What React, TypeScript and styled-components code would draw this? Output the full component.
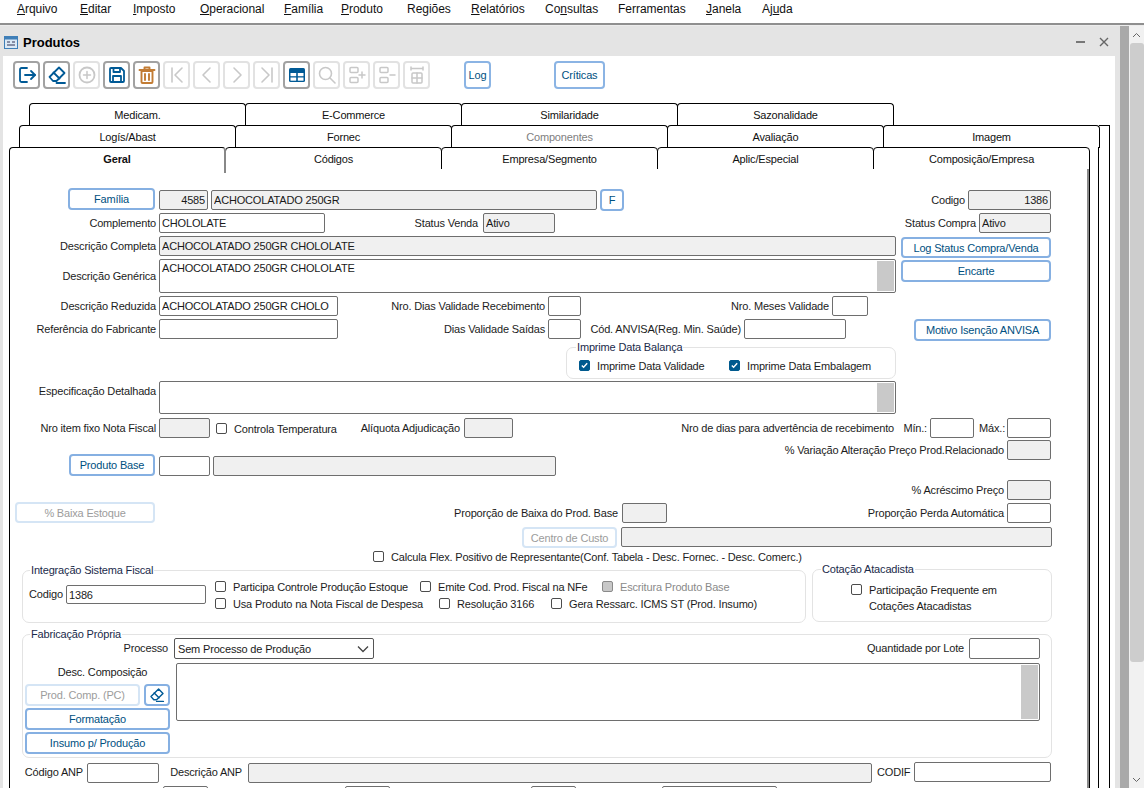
import React from "react";
import styled, { createGlobalStyle } from "styled-components";

const Global = createGlobalStyle`
  html, body { margin: 0; padding: 0; height: 788px; overflow: hidden; background: #fff; }
  body { font-family: "Liberation Sans", Arial, sans-serif; font-size: 11px; letter-spacing: -0.17px; color: #1a1a1a; }
  * { box-sizing: border-box; }
`;

const Shell = styled.div`display: flex; flex-direction: column; width: 1144px; height: 788px; overflow: hidden;`;
const MenuBar = styled.nav`display: flex; height: 23px; padding-left: 17px; align-items: center; background: #fff; flex: none;`;
const MenuItem = styled.span<{ $w: number }>`width: ${p => p.$w}px; font-size: 12px; letter-spacing: -0.03px; color: #111; flex: none; padding-bottom: 6px; u { text-underline-offset: 1px; }`;
const MenuRule = styled.div`height: 3px; flex: none; background: linear-gradient(#8f8f8f 0 2px, #ececec 2px);`;
const Desk = styled.div`display: flex; flex: 1; min-height: 0;`;
const Window = styled.section`width: 1120px; flex: none; display: flex; flex-direction: column; background: #e4e4e4; min-height: 0;`;
const TitleBar = styled.header`display: flex; align-items: center; height: 30px; flex: none; padding: 2px 5px 0 4px; color: #000;`;
const WindowTitle = styled.h1`margin: 0 0 0 5px; font-size: 13px; letter-spacing: 0; font-weight: 700; flex: 1;`;
const WindowAction = styled.button`border: 0; background: none; padding: 0; width: 23px; height: 16px; display: flex; align-items: center; justify-content: center; color: #555;`;
const WindowBody = styled.div`flex: 1; min-height: 0; margin: 0 5px 0 3px; background: #fff; overflow: hidden;`;
const Frame = styled.div`width: 9px; flex: none; background: #a9a9a9;`;
const ScrollBar = styled.div`width: 15px; flex: none; display: flex; flex-direction: column; align-items: center; background: #f1f1f1;`;
const ScrollArrow = styled.div`height: 17px; flex: none; display: flex; align-items: center; justify-content: center; color: #666;`;
const ScrollThumb = styled.div`width: 14px; height: 619px; flex: none; margin-left: 1px; border-radius: 3px; background: #cdcdcd;`;
const ScrollTrack = styled.div`flex: 1;`;

const Toolbar = styled.div`display: flex; height: 28px; margin: 5px 0 14px 10px;`;
const ToolButton = styled.button<{ $off?: boolean; $x?: number }>`
  width: 27px; height: 28px; margin: 0 3px 0 ${p => p.$x ?? 0}px; padding: 0; flex: none; background: #fff;
  border: 2px solid ${p => (p.$off ? "#e2e2e2" : "#a2a2a2")}; border-radius: 4px;
  display: flex; align-items: center; justify-content: center;
`;
const TextTool = styled.button<{ $w: number; $x: number }>`
  width: ${p => p.$w}px; height: 28px; margin-left: ${p => p.$x}px; padding: 0; flex: none; background: #fff; font: inherit; letter-spacing: inherit; color: #00507f;
  border: 2px solid #8bb4e4; border-radius: 4px;
`;

const Deck = styled.div`
  position: relative; margin-left: 6px; width: 1100px;
  &::before { content: ""; position: absolute; left: 1090px; top: 22px; width: 10px; height: 700px; border: 1px solid #000; border-width: 1px 1px 0 0; }
  &::after { content: ""; position: absolute; left: 1089px; top: 44px; width: 1px; height: 700px; background: #000; }
`;
const TabRow = styled.div<{ $x: number }>`display: flex; height: 22px; margin-left: ${p => p.$x}px;`;
const Tab = styled.div<{ $on?: boolean; $muted?: boolean; $bottom?: boolean }>`
  position: relative; width: 217px; height: ${p => (p.$on ? 26 : 23)}px; margin-right: -1px; flex: none;
  background: #fff; border: 1px solid #000; border-bottom: ${p => (p.$bottom && !p.$on ? "1px solid #000" : "0")}; border-radius: 4px 4px 0 0;
  ${p => p.$on ? "border-right: 2px solid #888; z-index: 2; font-weight: 700;" : ""}
  color: ${p => (p.$muted ? "#808080" : "#111")}; text-align: center; line-height: 22px; font-size: 11px;
`;
const Page = styled.div`
  position: relative; width: 1080px; height: 640px; border-left: 1px solid #000; border-right: 2px solid #8a8a8a; box-shadow: 1px 0 0 #000; margin-top: 0; padding-top: 19px; background: #fff;
`;

const Row = styled.div<{ $h: number }>`display: flex; align-items: flex-start; height: ${p => p.$h}px;`;
const Label = styled.label<{ $w: number; $x?: number; $dy?: number; $h?: number }>`
  flex: none; width: ${p => p.$w}px; margin: ${p => p.$dy ?? 0}px 0 0 ${p => p.$x ?? 0}px;
  height: ${p => p.$h ?? 20}px; line-height: ${p => p.$h ?? 20}px; text-align: right; white-space: nowrap; color: #1c1c1c;
`;
const Field = styled.input<{ $w: number; $x?: number; $dy?: number; $h?: number; $ro?: boolean; $right?: boolean }>`
  flex: none; width: ${p => p.$w}px; height: ${p => p.$h ?? 20}px; margin: ${p => p.$dy ?? 0}px 0 0 ${p => p.$x ?? 0}px;
  padding: 0 2px; font: inherit; letter-spacing: inherit; color: #1a1a1a; outline: none;
  border: 1px solid #6e6e6e; border-radius: 2px; background: ${p => (p.$ro ? "#f0f0f0" : "#fff")};
  text-align: ${p => (p.$right ? "right" : "left")};
`;
const Memo = styled.div<{ $w: number; $h: number; $x?: number }>`
  flex: none; display: flex; justify-content: space-between; width: ${p => p.$w}px; height: ${p => p.$h}px; margin-left: ${p => p.$x ?? 0}px;
  padding: 1px 1px 1px 2px; line-height: 15px; border: 1px solid #6e6e6e; border-radius: 2px; background: #fff;
`;
const MemoBar = styled.div`width: 17px; flex: none; background: #c9c9c9;`;
const Action = styled.button<{ $w: number; $x?: number; $dy?: number; $h?: number; $off?: boolean }>`
  flex: none; width: ${p => p.$w}px; height: ${p => p.$h ?? 22}px; margin: ${p => p.$dy ?? 0}px 0 0 ${p => p.$x ?? 0}px;
  padding: 0; font: inherit; letter-spacing: inherit; background: #fff; border-radius: 4px; white-space: nowrap;
  color: ${p => (p.$off ? "#9c9c9c" : "#00507f")}; border: 2px solid ${p => (p.$off ? "#d5e5f5" : "#86b0e2")};
  display: flex; align-items: center; justify-content: center;
`;
const CheckItem = styled.div<{ $w?: number; $x?: number; $dy?: number; $off?: boolean }>`
  flex: none; display: flex; align-items: center; gap: 7px; height: 17px; white-space: nowrap; width: ${p => (p.$w ? `${p.$w}px` : "auto")};
  margin: ${p => p.$dy ?? 0}px 0 0 ${p => p.$x ?? 0}px; color: ${p => (p.$off ? "#8a8a8a" : "#1c1c1c")};
`;
const Box = styled.span<{ $on?: boolean; $off?: boolean }>`
  flex: none; width: 11px; height: 11px; border-radius: 2px; display: flex; align-items: center; justify-content: center;
  border: 1px solid ${p => (p.$on ? "#005a8e" : p.$off ? "#8a8a8a" : "#4c4c4c")};
  background: ${p => (p.$on ? "#005a8e" : p.$off ? "#c8c8c8" : "#fff")};
`;
const Group = styled.div<{ $w: number; $h: number; $x?: number; $dy?: number }>`
  position: relative; flex: none; width: ${p => p.$w}px; height: ${p => p.$h}px; margin: ${p => p.$dy ?? 0}px 0 0 ${p => p.$x ?? 0}px;
  border: 1px solid #e3e3e3; border-radius: 7px;
`;
const Legend = styled.span<{ $x: number }>`
  position: absolute; top: -7px; left: ${p => p.$x}px; padding: 0 1px; height: 13px; line-height: 13px; background: #fff; color: #1a2a4a; white-space: nowrap;
`;
const BalanceBody = styled.div`display: flex; padding: 9px 0 0 12px;`;
const FiscalBody = styled.div`display: flex; padding: 7px 0 0 6px;`;
const FiscalChecks = styled.div`display: flex; flex-direction: column; margin-left: 9px;`;
const CheckLine = styled.div`display: flex;`;
const WholesaleBody = styled.div`padding: 12px 0 0 38px; display: flex; gap: 7px; line-height: 16px; align-items: flex-start;`;
const WholesaleBox = styled(Box)`margin-top: 2px;`;
const FabBody = styled.div`padding: 3px 0 0 2px;`;
const FabHead = styled.div`display: flex; height: 25px;`;
const FabMain = styled.div`display: flex;`;
const FabSide = styled.div`width: 145px; flex: none; display: flex; flex-direction: column; gap: 2px;`;
const FabCaption = styled.div`height: 19px; line-height: 18px; text-align: center; padding-left: 10px;`;
const FabPair = styled.div`display: flex; gap: 4px;`;
const Select = styled.div`
  flex: none; display: flex; align-items: center; justify-content: space-between; width: 200px; height: 21px; margin-left: 6px; padding: 0 4px 0 3px;
  border: 1px solid #555; border-radius: 2px; background: #fff;
`;

const Ic = styled.svg.attrs({ viewBox: "0 0 20 20", fill: "none", strokeLinecap: "round", strokeLinejoin: "round" })<{ $s?: number }>`
  width: ${p => p.$s ?? 20}px; height: ${p => p.$s ?? 20}px; flex: none;
`;
const BLUE = "#005a96"; const GREY = "#c8c8c8"; const ORANGE = "#c27c34";

const EraserIcon = ({ s }: { s?: number }) => (
  <Ic $s={s} stroke={BLUE} strokeWidth={1.8}>
    <path d="M12 2.5l5.5 5.5-8 8H6l-3.5-4z" /><path d="M6.5 7.5l6 6" /><path d="M9.5 18h8.5" />
  </Ic>
);
const icons: { off?: boolean; node: React.ReactNode }[] = [
  { node: <Ic stroke={BLUE} strokeWidth={1.8}><path d="M10 3H4.5A1.5 1.5 0 0 0 3 4.5v11A1.5 1.5 0 0 0 4.5 17H10" /><path d="M8 10h10" /><path d="M14 6l4 4-4 4" /></Ic> },
  { node: <EraserIcon /> },
  { off: true, node: <Ic stroke={GREY} strokeWidth={1.8}><circle cx="10" cy="10" r="7.5" /><path d="M10 6.5v7M6.5 10h7" strokeWidth={1.5} /></Ic> },
  { node: <Ic stroke={BLUE} strokeWidth={1.8}><path d="M3 4a1 1 0 0 1 1-1h10l3 3v10a1 1 0 0 1-1 1H4a1 1 0 0 1-1-1z" /><path d="M6.5 3v4h6.5V3" /><path d="M6 17v-6h8v6" /></Ic> },
  { node: <Ic stroke={ORANGE} strokeWidth={1.9}><path d="M4.5 6h11v11a1 1 0 0 1-1 1h-9a1 1 0 0 1-1-1z" /><path d="M2.5 5h15" /><path d="M7.5 4.5V2.5h5v2" /><path d="M8 9v6M12 9v6" /></Ic> },
  { off: true, node: <Ic stroke={GREY} strokeWidth={1.6}><path d="M5 3v14" /><path d="M15 3l-7 7 7 7" /></Ic> },
  { off: true, node: <Ic stroke={GREY} strokeWidth={1.6}><path d="M13 3l-7 7 7 7" /></Ic> },
  { off: true, node: <Ic stroke={GREY} strokeWidth={1.6}><path d="M7 3l7 7-7 7" /></Ic> },
  { off: true, node: <Ic stroke={GREY} strokeWidth={1.6}><path d="M15 3v14" /><path d="M5 3l7 7-7 7" /></Ic> },
  { node: <Ic><rect x="2" y="3" width="16" height="14" rx="1.5" fill={BLUE} /><rect x="3.5" y="8" width="5.7" height="3.2" fill="#fff" /><rect x="10.8" y="8" width="5.7" height="3.2" fill="#fff" /><rect x="3.5" y="12.5" width="5.7" height="3.2" fill="#fff" /><rect x="10.8" y="12.5" width="5.7" height="3.2" fill="#fff" /></Ic> },
  { off: true, node: <Ic stroke={GREY} strokeWidth={1.6}><circle cx="8.5" cy="8.5" r="6" /><path d="M13 13l5 5" /></Ic> },
  { off: true, node: <Ic stroke={GREY} strokeWidth={1.5}><rect x="3" y="2.5" width="8" height="5" rx="1" /><rect x="3" y="12.5" width="8" height="5" rx="1" /><path d="M15 7v6M12 10h6" /></Ic> },
  { off: true, node: <Ic stroke={GREY} strokeWidth={1.5}><rect x="3" y="2.5" width="8" height="5" rx="1" /><rect x="3" y="12.5" width="8" height="5" rx="1" /><path d="M13 10h5" /></Ic> },
  { off: true, node: <Ic stroke={GREY} strokeWidth={1.5}><path d="M4 3.5h12M4 2v3M16 2v3" /><rect x="5" y="8" width="10" height="10" rx="1" /><path d="M5 13h10M10 8v10" /></Ic> },
];

const Chk = () => (
  <svg viewBox="0 0 10 10" width="9" height="9" fill="none" stroke="#fff" strokeWidth="1.5"><path d="M2 5l2 2 4-4.5" /></svg>
);

const menu: [React.ReactNode, number][] = [
  [<><u>A</u>rquivo</>, 63], [<><u>E</u>ditar</>, 53], [<><u>I</u>mposto</>, 67], [<><u>O</u>peracional</>, 84],
  [<><u>F</u>amília</>, 57], [<><u>P</u>roduto</>, 66], [<>Re<u>g</u>iões</>, 64], [<><u>R</u>elatórios</>, 74],
  [<>Co<u>n</u>sultas</>, 73], [<>Ferramentas</>, 88], [<><u>J</u>anela</>, 56], [<>Aj<u>u</u>da</>, 50],
];

const DESC = "ACHOCOLATADO 250GR CHOLOLATE";

export default function App() {
  return (
    <Shell>
      <Global />
      <MenuBar>{menu.map(([t, w], i) => <MenuItem key={i} $w={w}>{t}</MenuItem>)}</MenuBar>
      <MenuRule />
      <Desk>
        <Window>
          <TitleBar>
            <svg width="14" height="13" viewBox="0 0 14 13"><rect x=".5" y=".5" width="13" height="12" fill="#dbe9f6" stroke="#3f7fb8" /><rect x="1" y="1" width="12" height="2.5" fill="#3f7fb8" /><path d="M3 6h3M3 9h8M8 6h3" stroke="#335" /></svg>
            <WindowTitle>Produtos</WindowTitle>
            <WindowAction aria-label="Minimizar"><svg width="9" height="10"><path d="M0 5h9" stroke="#777" strokeWidth="2" /></svg></WindowAction>
            <WindowAction aria-label="Fechar"><svg width="10" height="10" viewBox="0 0 10 10"><path d="M1 1l8 8M9 1l-8 8" stroke="#666" strokeWidth="1.4" /></svg></WindowAction>
          </TitleBar>
          <WindowBody>
            <Toolbar>
              {icons.map((b, i) => <ToolButton key={i} $off={b.off}>{b.node}</ToolButton>)}
              <TextTool $w={27} $x={31}>Log</TextTool>
              <TextTool $w={51} $x={63}>Críticas</TextTool>
            </Toolbar>
            <Deck>
              <TabRow $x={20}>
                {["Medicam.", "E-Commerce", "Similaridade", "Sazonalidade"].map(t => <Tab key={t}>{t}</Tab>)}
              </TabRow>
              <TabRow $x={10}>
                {["Logís/Abast", "Fornec", "Componentes", "Avaliação", "Imagem"].map(t => <Tab key={t} $muted={t === "Componentes"}>{t}</Tab>)}
              </TabRow>
              <TabRow $x={0}>
                {["Geral", "Códigos", "Empresa/Segmento", "Aplic/Especial", "Composição/Empresa"].map((t, i) => <Tab key={t} $on={i === 0} $bottom>{t}</Tab>)}
              </TabRow>
              <Page>
                <Row $h={25}>
                  <Action $x={58} $w={87}>Família</Action>
                  <Field $x={4} $dy={2} $w={49} $ro $right readOnly defaultValue="4585" />
                  <Field $x={3} $dy={2} $w={386} $ro readOnly defaultValue="ACHOCOLATADO 250GR" />
                  <Action $x={3} $dy={1} $w={24}>F</Action>
                  <Label $w={341} $dy={2}>Codigo</Label>
                  <Field $x={3} $dy={2} $w={83} $ro $right readOnly defaultValue="1386" />
                </Row>
                <Row $h={23}>
                  <Label $w={146}>Complemento</Label>
                  <Field $x={3} $w={166} readOnly defaultValue="CHOLOLATE" />
                  <Label $w={153}>Status Venda</Label>
                  <Field $x={5} $w={72} $ro readOnly defaultValue="Ativo" />
                  <Label $w={421}>Status Compra</Label>
                  <Field $x={3} $w={72} $ro readOnly defaultValue="Ativo" />
                </Row>
                <Row $h={23}>
                  <Label $w={146}>Descrição Completa</Label>
                  <Field $x={3} $w={737} $ro readOnly defaultValue={DESC} />
                  <Action $x={5} $dy={1} $w={150} $h={21}>Log Status Compra/Venda</Action>
                </Row>
                <Row $h={37}>
                  <Label $w={146} $h={34}>Descrição Genérica</Label>
                  <Memo $x={3} $w={737} $h={34}>{DESC}<MemoBar /></Memo>
                  <Action $x={5} $dy={1} $w={150}>Encarte</Action>
                </Row>
                <Row $h={23}>
                  <Label $w={146}>Descrição Reduzida</Label>
                  <Field $x={3} $w={179} readOnly defaultValue="ACHOCOLATADO 250GR CHOLO" />
                  <Label $w={207}>Nro. Dias Validade Recebimento</Label>
                  <Field $x={3} $w={33} />
                  <Label $w={248}>Nro. Meses Validade</Label>
                  <Field $x={3} $w={36} />
                </Row>
                <Row $h={28}>
                  <Label $w={146}>Referência do Fabricante</Label>
                  <Field $x={3} $w={179} />
                  <Label $w={207}>Dias Validade Saídas</Label>
                  <Field $x={3} $w={33} />
                  <Label $w={160}>Cód. ANVISA(Reg. Min. Saúde)</Label>
                  <Field $x={3} $w={102} />
                  <Action $x={68} $w={137}>Motivo Isenção ANVISA</Action>
                </Row>
                <Row $h={34}>
                  <Group $x={556} $w={330} $h={32}>
                    <Legend $x={9}>Imprime Data Balança</Legend>
                    <BalanceBody>
                      <CheckItem $w={150}><Box $on><Chk /></Box>Imprime Data Validade</CheckItem>
                      <CheckItem><Box $on><Chk /></Box>Imprime Data Embalagem</CheckItem>
                    </BalanceBody>
                  </Group>
                </Row>
                <Row $h={37}>
                  <Label $w={146}>Especificação Detalhada</Label>
                  <Memo $x={3} $w={737} $h={33}><span /><MemoBar /></Memo>
                </Row>
                <Row $h={22}>
                  <Label $w={146}>Nro item fixo Nota Fiscal</Label>
                  <Field $x={3} $w={51} $ro />
                  <CheckItem $x={6} $dy={2} $w={124}><Box />Controla Temperatura</CheckItem>
                  <Label $w={120}>Alíquota Adjudicação</Label>
                  <Field $x={4} $w={49} $ro />
                  <Label $w={381}>Nro de dias para advertência de recebimento</Label>
                  <Label $x={8} $w={25}>Mín.:</Label>
                  <Field $x={3} $w={44} />
                  <Label $x={5} $w={25}>Máx.:</Label>
                  <Field $x={3} $w={44} />
                </Row>
                <Row $h={14}>
                  <Label $w={994}>% Variação Alteração Preço Prod.Relacionado</Label>
                  <Field $x={3} $w={44} $ro />
                </Row>
                <Row $h={26}>
                  <Action $x={59} $w={86}>Produto Base</Action>
                  <Field $x={4} $dy={2} $w={51} />
                  <Field $x={3} $dy={2} $w={343} $ro />
                </Row>
                <Row $h={22}>
                  <Label $w={994}>% Acréscimo Preço</Label>
                  <Field $x={3} $w={44} $ro />
                </Row>
                <Row $h={25}>
                  <Action $x={5} $w={140} $h={21} $off>% Baixa Estoque</Action>
                  <Label $w={463} $dy={1}>Proporção de Baixa do Prod. Base</Label>
                  <Field $x={4} $dy={1} $w={45} $ro />
                  <Label $w={337} $dy={1}>Proporção Perda Automática</Label>
                  <Field $x={3} $dy={1} $w={44} />
                </Row>
                <Row $h={22}>
                  <Action $x={512} $w={95} $h={21} $off>Centro de Custo</Action>
                  <Field $x={4} $w={431} $ro />
                </Row>
                <Row $h={20}>
                  <CheckItem $x={363} $dy={-1}><Box />Calcula Flex. Positivo de Representante(Conf. Tabela - Desc. Fornec. - Desc. Comerc.)</CheckItem>
                </Row>
                <Row $h={65}>
                  <Group $x={12} $dy={1} $w={784} $h={53}>
                    <Legend $x={7}>Integração Sistema Fiscal</Legend>
                    <FiscalBody>
                      <Label $w={33} $dy={6}>Codigo</Label>
                      <Field $x={4} $dy={7} $w={140} $h={19} readOnly defaultValue="1386" />
                      <FiscalChecks>
                        <CheckLine>
                          <CheckItem $w={205}><Box />Participa Controle Produção Estoque</CheckItem>
                          <CheckItem $w={182}><Box />Emite Cod. Prod. Fiscal na NFe</CheckItem>
                          <CheckItem $off><Box $off />Escritura Produto Base</CheckItem>
                        </CheckLine>
                        <CheckLine>
                          <CheckItem $w={224}><Box />Usa Produto na Nota Fiscal de Despesa</CheckItem>
                          <CheckItem $w={112}><Box />Resolução 3166</CheckItem>
                          <CheckItem><Box />Gera Ressarc. ICMS ST (Prod. Insumo)</CheckItem>
                        </CheckLine>
                      </FiscalChecks>
                    </FiscalBody>
                  </Group>
                  <Group $x={6} $w={240} $h={53}>
                    <Legend $x={8}>Cotação Atacadista</Legend>
                    <WholesaleBody>
                      <WholesaleBox />
                      <span>Participação Frequente em<br />Cotações Atacadistas</span>
                    </WholesaleBody>
                  </Group>
                </Row>
                <Row $h={128}>
                  <Group $x={12} $w={1030} $h={124}>
                    <Legend $x={7}>Fabricação Própria</Legend>
                    <FabBody>
                      <FabHead>
                        <Label $w={143} $h={20}>Processo</Label>
                        <Select>Sem Processo de Produção
                          <svg width="12" height="8" viewBox="0 0 12 8" fill="none" stroke="#444" strokeWidth="1.3"><path d="M1 1.5l5 5 5-5" /></svg>
                        </Select>
                        <Label $w={590} $h={20}>Quantidade por Lote</Label>
                        <Field $x={5} $w={71} $h={21} />
                      </FabHead>
                      <FabMain>
                        <FabSide>
                          <FabCaption>Desc. Composição</FabCaption>
                          <FabPair>
                            <Action $w={115} $off>Prod. Comp. (PC)</Action>
                            <Action $w={26} aria-label="Limpar"><EraserIcon s={16} /></Action>
                          </FabPair>
                          <Action $w={145}>Formatação</Action>
                          <Action $w={145}>Insumo p/ Produção</Action>
                        </FabSide>
                        <Memo $x={6} $w={864} $h={58}><span /><MemoBar /></Memo>
                      </FabMain>
                    </FabBody>
                  </Group>
                </Row>
                <Row $h={24}>
                  <Label $w={73}>Código ANP</Label>
                  <Field $x={4} $dy={1} $w={72} />
                  <Label $w={83}>Descrição ANP</Label>
                  <Field $x={6} $dy={1} $w={624} $ro />
                  <Label $x={5} $w={32}>CODIF</Label>
                  <Field $x={5} $w={137} />
                </Row>
                <Row $h={20}>
                  <Field $x={153} $w={45} />
                  <Field $x={137} $w={45} />
                  <Field $x={141} $w={45} />
                  <Field $x={86} $w={115} />
                </Row>
              </Page>
            </Deck>
          </WindowBody>
        </Window>
        <Frame />
        <ScrollBar>
          <ScrollArrow><svg width="9" height="6" viewBox="0 0 9 6" fill="none" stroke="#666"><path d="M1 5l3.5-3.5L8 5" /></svg></ScrollArrow>
          <ScrollThumb />
          <ScrollTrack />
          <ScrollArrow><svg width="9" height="6" viewBox="0 0 9 6" fill="none" stroke="#666"><path d="M1 1l3.5 3.5L8 1" /></svg></ScrollArrow>
        </ScrollBar>
      </Desk>
    </Shell>
  );
}
